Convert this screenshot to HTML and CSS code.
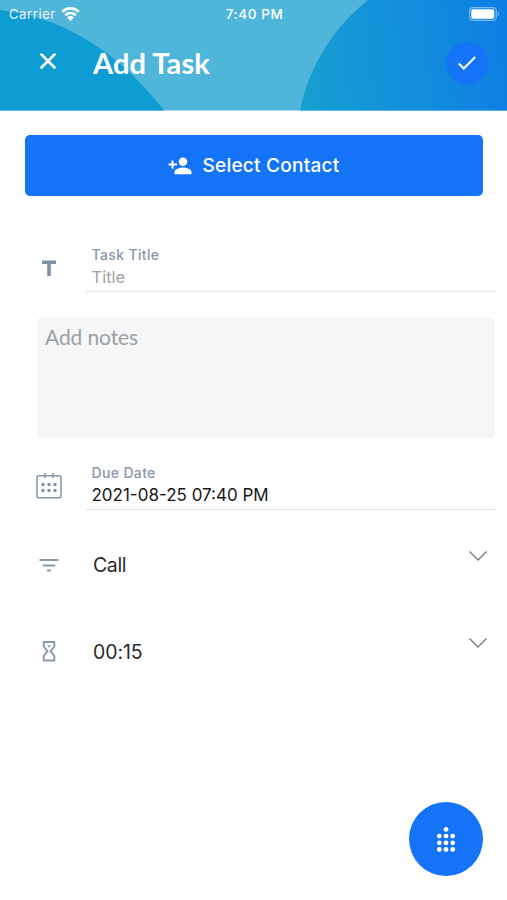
FILE: index.html
```html
<!DOCTYPE html>
<html lang="en">
<head>
<meta charset="utf-8">
<title>Add Task</title>
<link rel="stylesheet" href="styles.css">
</head>
<body>
<header class="header">
  <svg class="header-art" viewBox="0 0 507 111" preserveAspectRatio="none" aria-hidden="true">
    <defs>
      <linearGradient id="sky" x1="300" y1="60" x2="507" y2="40" gradientUnits="userSpaceOnUse">
        <stop offset="0" stop-color="#169fd0"/>
        <stop offset=".5" stop-color="#138fdb"/>
        <stop offset="1" stop-color="#0e7fe3"/>
      </linearGradient>
    </defs>
    <path fill="#4fb5da" d="M0 0H507V111H0z"/>
    <path fill="#0d9dd3" d="M0 10C65 17 121 55 164 111H0z"/>
    <path fill="url(#sky)" d="M368 0C334 27 309 66 300 111H507V0z"/>
  </svg>
  <div class="status">
    <div class="carrier"><span class="carrier-name">Carrier</span>
      <svg width="19" height="14" viewBox="0 0 19 14" fill="none" stroke="#fff" stroke-width="2.6"><path d="M1.2 4.8C6 .2 13 .2 17.800 4.800M4.200 8.200C7.300 5.400 11.700 5.400 14.800 8.200"/><path fill="#fff" stroke="none" d="M6 10.400Q9.500 7.700 13 10.400L9.500 13.900z"/></svg>
    </div>
    <span class="time">7:40 PM</span>
    <svg class="battery" width="31" height="14" viewBox="0 0 31 14"><rect x=".7" y=".7" width="26.600" height="12.600" rx="3.500" fill="none" stroke="#fff" stroke-opacity=".45" stroke-width="1.200"/><rect x="2.300" y="2.300" width="23" height="9.400" rx="2" fill="#fff"/><path d="M28.700 4.500Q31 7 28.700 9.500z" fill="#fff" opacity=".5"/></svg>
  </div>
  <div class="titlebar">
    <svg class="close" width="16" height="16" viewBox="0 0 16 16" fill="none" stroke="#fff" stroke-width="2.500" stroke-linecap="round"><path d="M1.500 1.500l13 13M14.500 1.500l-13 13"/></svg>
    <h1 class="title"><span>Add Task</span></h1>
    <div class="confirm"><svg width="20" height="16" viewBox="0 0 20 16" fill="none" stroke="#fff" stroke-width="2"><path d="M1.800 8.500l5 5L18.200 2"/></svg></div>
  </div>
</header>
<main>
  <div class="select">
    <svg width="24" height="18" viewBox="0 0 24 18" fill="#fff"><circle cx="15" cy="4.800" r="4.300"/><path d="M6.500 17.300v-2.200c0-3 5.200-4.600 8.500-4.600s8.500 1.600 8.500 4.600v2.200z"/><path d="M3.500 3.500h2v3H9v2H5.500v3.200h-2V8.500H.5v-2h3z"/></svg>
    <span class="select-text">Select Contact</span>
  </div>
  <section class="row row-title">
    <svg class="icon" width="28" height="28" viewBox="0 0 28 28"><path fill="#8090a9" d="M7 7.500h14V11h-5.200v12h-3.600V11H7z"/></svg>
    <div class="field">
      <div class="label"><span class="label-title">Task Title</span></div>
      <div class="value placeholder"><span>Title</span></div>
    </div>
  </section>
  <div class="notes"><span>Add notes</span></div>
  <section class="row row-date">
    <svg class="icon" width="28" height="28" viewBox="0 0 28 28" fill="none" stroke="#8594aa" stroke-width="1.500"><rect x="2" y="3.700" width="24" height="22" rx="1.500"/><path d="M10 1v5M18 1v5"/><g fill="#8090a9" stroke="none"><circle cx="8" cy="12.500" r="1.700"/><circle cx="14" cy="12.500" r="1.700"/><circle cx="20" cy="12.500" r="1.700"/><circle cx="8" cy="18.500" r="1.700"/><circle cx="14" cy="18.500" r="1.700"/><circle cx="20" cy="18.500" r="1.700"/></g></svg>
    <div class="field">
      <div class="label"><span class="label-date">Due Date</span></div>
      <div class="value date"><span>2021-08-25 07:40 PM</span></div>
    </div>
  </section>
  <section class="choice">
    <svg class="icon" width="28" height="28" viewBox="0 0 28 28" stroke="#8b9bac" stroke-width="2"><path d="M4.500 9h19M7.800 14.500h12.400M12 19.500h4"/></svg>
    <span class="choice-text call">Call</span>
    <svg class="chevron" width="20" height="12" viewBox="0 0 20 12" fill="none" stroke="#7c7c7c" stroke-width="1.400"><path d="M1.500 1.500L10 10l8.500-8.500"/></svg>
  </section>
  <section class="choice choice-duration">
    <svg class="icon" width="28" height="28" viewBox="0 0 28 28" fill="none" stroke="#8b99aa" stroke-width="1.900"><path d="M8.700 4h10.600v4.500L15.500 13.200l3.800 4.800v4.500H8.700V18l3.800-4.800-3.800-4.700z"/><path fill="#8b99aa" stroke="none" d="M12 7.300h4l-2 2.500z"/></svg>
    <span class="choice-text duration">00:15</span>
    <svg class="chevron" width="20" height="12" viewBox="0 0 20 12" fill="none" stroke="#7c7c7c" stroke-width="1.400"><path d="M1.500 1.500L10 10l8.500-8.500"/></svg>
  </section>
</main>
<div class="fab"><svg width="20" height="28" viewBox="0 0 20 28" fill="#fff"><circle cx="10" cy="4.400" r="2.400"/><circle cx="3.300" cy="11.100" r="2.400"/><circle cx="10" cy="11.100" r="2.400"/><circle cx="16.700" cy="11.100" r="2.400"/><circle cx="3.300" cy="17.800" r="2.400"/><circle cx="10" cy="17.800" r="2.400"/><circle cx="16.700" cy="17.800" r="2.400"/><circle cx="3.300" cy="24.500" r="2.400"/><circle cx="10" cy="24.500" r="2.400"/><circle cx="16.700" cy="24.500" r="2.400"/></svg></div>
</body>
</html>
```
FILE: styles.css
```css
* { box-sizing: border-box; }
body { margin: 0; height: 900px; overflow: hidden; position: relative; background: #fff; font-family: Inter, "Liberation Sans", sans-serif; color: #222; }
svg { display: block; flex: none; }
.header { position: relative; height: 110.5px; overflow: hidden; color: #fff; }
.header-art { position: absolute; inset: 0; width: 100%; height: 100%; }
.status { position: relative; display: grid; grid-template-columns: 1fr auto 1fr; align-items: center; height: 27px; padding: 0 7px 0 9px; font-size: 13px; }
.carrier { display: flex; align-items: center; gap: 5px; }
.carrier-name { letter-spacing: .6px; opacity: .9; }
.time { font-weight: 500; font-size: 13.5px; letter-spacing: .6px; }
.battery { justify-self: end; }
.titlebar { position: relative; display: flex; align-items: center; height: 71px; padding: 0 19px 0 40px; }
.close { margin-bottom: 4px; }
.title { margin: 0 auto 0 37px; font: 700 29px/36px Lato, sans-serif; letter-spacing: .1px; }
.confirm { display: grid; place-items: center; width: 42px; height: 42px; border-radius: 50%; background: #1473f6; }
.select { display: flex; align-items: center; justify-content: center; gap: 10px; width: 458px; height: 61px; margin: 24.5px 0 0 25px; border-radius: 5px; background: #1473f6; color: #fff; font-size: 19px; font-weight: 500; letter-spacing: .25px; }
.row { display: flex; margin: 0 12px 0 35px; }
.row-title { margin-top: 45px; }
.row-title .icon { margin-top: 12px; }
.field { flex: 1; height: 51px; margin-left: 23px; padding: 3px 0 0 5.500px; border-bottom: 1px solid #e2e3e5; }
.label { height: 21px; font-size: 14px; line-height: 21px; font-weight: 500; color: #8997ad; letter-spacing: .35px; }
.value { height: 24px; font-size: 17px; line-height: 24px; }
.placeholder { font-size: 16.500px; color: #a0a0a0; }
.notes { height: 121px; margin: 25px 12px 0 37px; padding: 7px 8px; border-radius: 5px; background: #f5f6f8; color: #9d9fa1; font: 21px/26px Lato, sans-serif; letter-spacing: -.1px; }
.row-date { margin-top: 21px; }
.row-date .icon { margin-top: 13px; }
.date { color: #171717; }
.choice { display: flex; align-items: center; height: 28px; margin: 41px 19px 0 35px; }
.choice-duration { margin-top: 59px; }
.choice-text { flex: 1; margin-left: 30px; font-size: 19.5px; letter-spacing: -.1px; color: #292929; }
.call { letter-spacing: -.4px; }
.chevron { margin-top: -18px; }
.fab { position: absolute; left: 409px; top: 802px; display: grid; place-items: center; width: 74px; height: 74px; border-radius: 50%; background: #1473f6; }
```
